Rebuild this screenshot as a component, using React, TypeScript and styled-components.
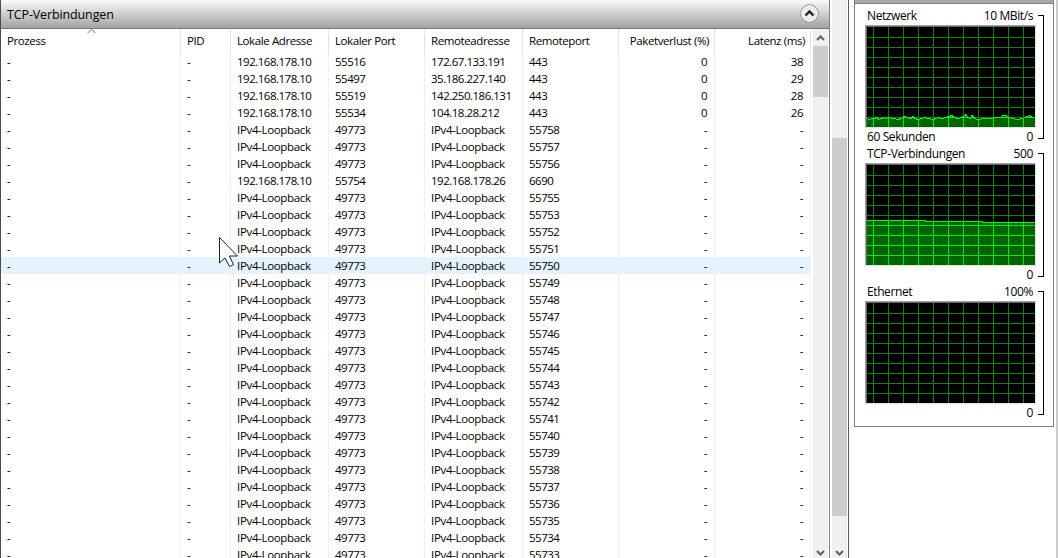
import React from 'react';
import styled, { createGlobalStyle, css } from 'styled-components';

const Global = createGlobalStyle`
  * { box-sizing: border-box; }
  body { margin: 0; background: #fff; overflow: hidden; color: #000; font-family: "Open Sans", "Noto Sans", sans-serif; }
`;

const Window = styled.div`
  display: flex;
  width: 1058px;
  height: 558px;
  overflow: hidden;
  background: #fff;
`;

const Main = styled.section`
  width: 830px;
  flex: none;
  display: flex;
  flex-direction: column;
  border-left: 1px solid #4c4c4c;
  border-right: 1px solid #808080;
`;

const TitleBar = styled.header`
  height: 29px;
  flex: none;
  display: flex;
  align-items: center;
  justify-content: space-between;
  padding: 0 10px 1px 6px;
  border-bottom: 1px solid #7a7a7a;
  background: linear-gradient(#fafafa, #a2a2a2);
`;

const Title = styled.h1`
  margin: 0;
  padding-top: 2px;
  font-size: 12.5px;
  font-weight: 400;
  letter-spacing: -0.13px;
  white-space: nowrap;
`;

const Collapse = styled.button`
  width: 19px;
  height: 19px;
  padding: 0;
  border: 0;
  background: none;
  display: block;
  svg { display: block; }
`;

const TableArea = styled.div`
  display: flex;
  flex: 1;
  min-height: 0;
`;

const Table = styled.div`
  width: 810px;
  flex: none;
  overflow: hidden;
`;

const columns = '180px 50px 98px 96px 98px 96px 96px 96px';

const HeadRow = styled.div`
  display: grid;
  grid-template-columns: ${columns};
  height: 24px;
`;

const Row = styled.div<{ $active?: boolean }>`
  display: grid;
  grid-template-columns: ${columns};
  height: 17px;
  background: ${p => (p.$active ? '#e5f3ff' : '#fff')};
`;

const Cell = styled.div<{ $right?: boolean; $head?: boolean; $tight?: boolean }>`
  border-right: 1px solid #e8f2fd;
  padding: ${p => (p.$right ? '0 7px 0 0' : '0 0 0 6px')};
  text-align: ${p => (p.$right ? 'right' : 'left')};
  font-size: 11.5px;
  letter-spacing: ${p => (p.$tight ? '-0.5px' : '-0.33px')};
  line-height: 17px;
  white-space: nowrap;
  ${p => p.$head && css`
    border-color: #e2e2e2;
    line-height: 24px;
    letter-spacing: -0.4px;
    padding-right: ${p.$right ? '5px' : 0};
  `}
`;

const SortMark = styled.svg`
  position: absolute;
  left: 86px;
  top: 28px;
`;

const Scroll = styled.div`
  width: 15px;
  flex: none;
  display: flex;
  flex-direction: column;
  background: #f0f0f0;
`;

const InnerScroll = styled(Scroll)`margin-left: 2px;`;
const OuterScroll = styled(Scroll)`margin: 0 1px 0 2px;`;

const Arrow = styled.svg`
  display: block;
  flex: none;
  width: 15px;
`;

const Thumb = styled.div<{ $h: number }>`
  height: ${p => p.$h}px;
  background: #cdcdcd;
`;

const Spacer = styled.div<{ $h?: number }>`
  flex: ${p => (p.$h ? 'none' : 1)};
  height: ${p => p.$h ?? 0}px;
`;

const Divider = styled.div`
  width: 1px;
  background: #5c5c5c;
`;

const Side = styled.aside`
  width: 200px;
  height: 427px;
  margin-left: 5px;
  flex: none;
  border: 1px solid #808080;
  border-top: 0;
`;

const SideBar = styled.div`
  height: 4px;
  background: #a8a8a8;
  border-bottom: 1px solid #808080;
`;

const Edge = styled.div`
  width: 2px;
  margin-left: 2px;
  background: #cdcdcd;
`;

const Graph = styled.figure`
  margin: 0;
  height: 138px;
  display: flex;
  padding: 4px 0 0 10px;
`;

const GraphBody = styled.div`width: 171px;`;

const Line = styled.div<{ $h: number }>`
  display: flex;
  justify-content: space-between;
  height: ${p => p.$h}px;
  line-height: ${p => (p.$h === 17 ? 16 : 18)}px;
  padding: 0 3px 0 2px;
  font-size: 12px;
  letter-spacing: -0.4px;
  white-space: nowrap;
`;

const Plot = styled.div`
  width: 171px;
  height: 103px;
  border-style: solid;
  border-width: 1px;
  border-color: #a0a0a0 #e3e3e3 #e3e3e3 #a0a0a0;
  svg {
    display: block;
    border-left: 1px solid #696969;
    border-top: 1px solid #696969;
  }
`;

const Bracket = styled.div`
  width: 6px;
  height: 124px;
  margin: 7px 0 0 2px;
  border: 1px solid #000;
  border-left: 0;
`;

const Pointer = styled.svg`
  position: absolute;
  left: 219px;
  top: 236px;
`;

const first = [
  ['192.168.178.10', '55516', '172.67.133.191', '443', '0', '38'],
  ['192.168.178.10', '55497', '35.186.227.140', '443', '0', '29'],
  ['192.168.178.10', '55519', '142.250.186.131', '443', '0', '28'],
  ['192.168.178.10', '55534', '104.18.28.212', '443', '0', '26'],
];
const loop = (port: number) => ['IPv4-Loopback', '49773', 'IPv4-Loopback', String(port), '-', '-'];
const rows = [
  ...first,
  loop(55758), loop(55757), loop(55756),
  ['192.168.178.10', '55754', '192.168.178.26', '6690', '-', '-'],
  ...[55755, 55753, 55752, 55751, 55750, 55749, 55748, 55747, 55746, 55745, 55744, 55743, 55742,
    55741, 55740, 55739, 55738, 55737, 55736, 55735, 55734, 55733].map(loop),
];
const heads = ['Prozess', 'PID', 'Lokale Adresse', 'Lokaler Port', 'Remoteadresse', 'Remoteport', 'Paketverlust (%)', 'Latenz (ms)'];

const network: number[][] = [
  [0, 91], [2, 92], [7, 91], [10, 90], [12, 92], [14, 91], [17, 90], [19, 91], [21, 90], [27, 91],
  [31, 92], [34, 91], [37, 89], [41, 90], [44, 91], [46, 89], [48, 91], [51, 92], [55, 91], [57, 90],
  [62, 91], [66, 92], [69, 91], [71, 90], [75, 91], [82, 89], [85, 88], [87, 90], [92, 91], [98, 88],
  [99, 87], [101, 90], [103, 91], [105, 88], [108, 91], [110, 92], [119, 91], [133, 90], [136, 88],
  [139, 88], [142, 90], [146, 91], [150, 92], [156, 91], [158, 90], [163, 88], [165, 90], [168, 90],
];
const tcp: number[][] = [[0, 55], [58, 55], [59, 56], [115, 56], [116, 57], [168, 57]];

const gridPath =
  Array.from({ length: 11 }, (_, i) => `M${6.5 + i * 15} 0V100`).join('') +
  Array.from({ length: 9 }, (_, i) => `M0 ${10.5 + i * 10}H168`).join('');

function Chart({ id, data }: { id: string; data?: number[][] }) {
  const pts = data?.map(([x, y]) => `${x},${y + 0.5}`).join(' ');
  return (
    <svg width="169" height="101" viewBox="0 0 168 100" shapeRendering="crispEdges">
      <rect width="168" height="100" fill="#000" />
      <path d={gridPath} stroke="#0a8212" fill="none" />
      {pts && (
        <>
          <clipPath id={id}><polygon points={`0,100 ${pts} 168,100`} /></clipPath>
          <g clipPath={`url(#${id})`}>
            <rect width="168" height="100" fill="#006400" />
            <path d={gridPath} stroke="#0ae614" fill="none" />
          </g>
          <polyline points={pts} fill="none" stroke="#00ff00" />
        </>
      )}
    </svg>
  );
}

const graphs = [
  { id: 'net', name: 'Netzwerk', max: '10 MBit/s', span: '60 Sekunden', data: network },
  { id: 'tcp', name: 'TCP-Verbindungen', max: '500', span: '', data: tcp },
  { id: 'eth', name: 'Ethernet', max: '100%', span: '', data: undefined },
];

export default function App() {
  return (
    <Window>
      <Global />
      <Main>
        <TitleBar>
          <Title>TCP-Verbindungen</Title>
          <Collapse aria-label="Einklappen">
            <svg width="19" height="19" viewBox="0 0 19 19">
              <circle cx="9.5" cy="9.5" r="8.8" fill="#ececec" stroke="#8a8a8a" />
              <circle cx="9.5" cy="9.5" r="7.8" fill="none" stroke="#fff" strokeOpacity=".6" />
              <path d="M5.5 11.5L9.5 7.5L13.5 11.5" fill="none" stroke="#222" strokeWidth="2.4" />
            </svg>
          </Collapse>
        </TitleBar>
        <TableArea>
          <Table>
            <HeadRow>
              {heads.map((h, i) => <Cell key={h} $head $right={i > 5}>{h}</Cell>)}
            </HeadRow>
            {rows.map((r, n) => (
              <Row key={n} $active={n === 12}>
                {['-', '-', ...r].map((v, i) => (
                  <Cell key={i} $right={i > 5} $tight={/^\d/.test(v)}>{v}</Cell>
                ))}
              </Row>
            ))}
          </Table>
          <InnerScroll>
            <Arrow height="17" viewBox="0 0 15 17">
              <path d="M4 11L7.5 7.5L11 11" fill="none" stroke="#606060" strokeWidth="2" />
            </Arrow>
            <Thumb $h={51} />
            <Spacer />
            <Arrow height="17" viewBox="0 0 15 17">
              <path d="M4 10L7.5 13.5L11 10" fill="none" stroke="#606060" strokeWidth="2" />
            </Arrow>
          </InnerScroll>
        </TableArea>
      </Main>
      <OuterScroll>
        <Spacer $h={138} />
        <Thumb $h={378} />
        <Spacer />
        <Arrow height="17" viewBox="0 0 15 17">
          <path d="M4 10L7.5 13.5L11 10" fill="none" stroke="#606060" strokeWidth="2" />
        </Arrow>
      </OuterScroll>
      <Divider />
      <Side>
        <SideBar />
        {graphs.map(g => (
          <Graph key={g.id}>
            <GraphBody>
              <Line $h={17}><span>{g.name}</span><span>{g.max}</span></Line>
              <Plot><Chart id={g.id} data={g.data} /></Plot>
              <Line $h={18}><span>{g.span}</span><span>0</span></Line>
            </GraphBody>
            <Bracket />
          </Graph>
        ))}
      </Side>
      <Edge />
      <SortMark width="10" height="6" viewBox="0 0 10 6">
        <path d="M1.5 5L5.5 1.5L9.5 5" fill="none" stroke="#777" />
      </SortMark>
      <Pointer width="20" height="32" viewBox="0 0 20 32">
        <path d="M.5 1.5V27L6 21.8L10.5 30.5L14.5 28.6L10.3 20H18.5Z" fill="#fff" stroke="#222" />
      </Pointer>
    </Window>
  );
}
